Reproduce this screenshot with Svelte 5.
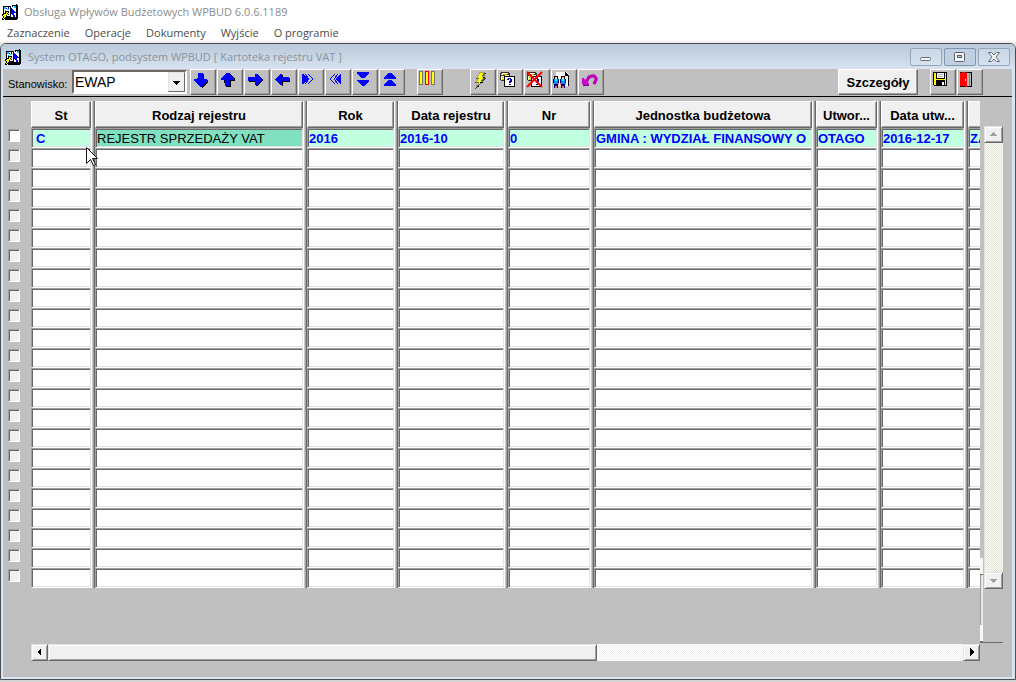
<script>
  const menu = ['Zaznaczenie', 'Operacje', 'Dokumenty', 'Wyjście', 'O programie'];

  const columns = [
    { title: 'St', width: 64, value: 'C' },
    { title: 'Rodzaj rejestru', width: 212, value: 'REJESTR SPRZEDAŻY VAT' },
    { title: 'Rok', width: 91, value: '2016' },
    { title: 'Data rejestru', width: 110, value: '2016-10' },
    { title: 'Nr', width: 86, value: '0' },
    { title: 'Jednostka budżetowa', width: 222, value: 'GMINA : WYDZIAŁ FINANSOWY O' },
    { title: 'Utwor...', width: 65, value: 'OTAGO' },
    { title: 'Data utw...', width: 87, value: '2016-12-17' },
    { title: '', width: 64, value: 'ZA' }
  ];

  const rows = Array.from({ length: 23 }, (_, i) => i);

  const navigation = [
    { name: 'Następny', icon: 'down' },
    { name: 'Poprzedni', icon: 'up' },
    { name: 'W prawo', icon: 'right' },
    { name: 'W lewo', icon: 'left' },
    { name: 'Ostatnia kolumna', icon: 'lastCol' },
    { name: 'Pierwsza kolumna', icon: 'firstCol' },
    { name: 'Ostatni', icon: 'last' },
    { name: 'Pierwszy', icon: 'first' }
  ];

  const actions = [
    { name: 'Wykonaj', icon: 'bolt' },
    { name: 'Zapytanie', icon: 'query' },
    { name: 'Anuluj zapytanie', icon: 'cancel' },
    { name: 'Użytkownicy', icon: 'people' },
    { name: 'Cofnij', icon: 'undo' }
  ];
</script>

{#snippet appIcon()}
  <svg class="app-icon" viewBox="0 0 16 16" shape-rendering="crispEdges" aria-hidden="true">
    <path d="M1 2h9V1h4V0h1v1h1v14h-1v1H3v-1H1z" fill="#000" />
    <path d="M2 3h6v9H2zM9 2h5v11H9z" fill="#fff" />
    <path d="M2 3h2v2H2zM5 5h2v1H5zM3 6h1v1H3zM12 2h2v2h-2z" fill="#0cf" />
    <path d="M9 4h1v1h1v1h1v1h1v1h1v1h-2v2h1v2h-2v-2h-1v-1H9z" fill="#00f" />
    <path d="M4 4h1v1H4zM6 3h1v2H6zM10 2h1v1h-1z" fill="#00c" />
    <path d="M3 7h4v2H6v1h1v1H5v2H4v2H2v1H0v-2h1v-2H0v-2h1V9h2z" fill="#000" />
    <path d="M4 8h2v1H5v1h1v1H4v2H3v1H2v1H1v-1h1v-2H1v-1h1v-1h2z" fill="#ff0" />
  </svg>
{/snippet}

{#snippet database()}
  <path d="M4 3h8v1h1v8H4v-1H3V4h1z" fill="#333" />
  <path d="M5 4h6v1H5zM4 5h2v1H4zM8 6h4v2H8zM4 7h3v4H4z" fill="#ffffb0" />
  <path d="M6 5h4v1H6zM5 8h2v1H5zM5 10h2v1H5z" fill="#c9b900" />
  <path d="M7 7h11v11H7z" fill="#000" />
  <path d="M8 8h9v9H8z" fill="#fff" />
  <path d="M11 9h3v1h1v3h-1v1h-2v-2h1v-2h-1v1h-2v-1h1zM12 15h2v1h-2z" fill="#009" />
{/snippet}

{#snippet person(x)}
  <g transform="translate({x} 0)">
    <path d="M2 7h4v3H2z" fill="#000" />
    <path d="M3 8h2v2H3z" fill="#fc9" />
    <path d="M1 10h6v6H6v3H4v-2v2H2v-3H1z" fill="#006" />
    <path d="M2 10h4v5H2z" fill="#08f" />
    <path d="M3 10h2v2H3z" fill="#0ff" />
    <path d="M1 14h1v2H1zM6 14h1v2H6zM3 17h2v2H3z" fill="#f66" />
  </g>
{/snippet}

{#snippet glyph(kind)}
  <svg class="glyph" viewBox="1 1 23 22" shape-rendering="crispEdges" aria-hidden="true">
    {#if kind === 'down'}
      <path d="M9 5h5v6h4v2l-6 6-6-6z" fill="#000" />
      <path d="M8 4h5v6h4v2l-6 6h-1l-6-6v-2h4z" fill="#00f" />
    {:else if kind === 'up'}
      <path d="M9 18h5v-6h4v-2l-6-6-6 6z" fill="#000" />
      <path d="M8 17h5v-6h4V9l-6-5h-1L4 9v2h4z" fill="#00f" />
    {:else if kind === 'right'}
      <path d="M5 9h7V6h2l5 5-5 6h-2v-4H5z" fill="#000" />
      <path d="M4 8h7V5h2l5 5v1l-5 5h-2v-4H4z" fill="#00f" />
    {:else if kind === 'left'}
      <path d="M19 9h-7V6h-1l-5 5 5 6h1v-4h7z" fill="#000" />
      <path d="M18 8h-7V5H9l-5 5v1l5 5h2v-4h7z" fill="#00f" />
    {:else if kind === 'lastCol'}
      <path d="M4 5h1l5 5-5 5H4z" fill="#00f" />
      <path d="M7 5l4 5-4 5M10 5l5 5-5 5" fill="none" stroke="#00f" />
    {:else if kind === 'firstCol'}
      <path d="M16 5h-1l-5 5 5 5h1z" fill="#00f" />
      <path d="M13 5l-4 5 4 5M10 5l-5 5 5 5" fill="none" stroke="#00f" />
    {:else if kind === 'last'}
      <path d="M5 3h12v2l-5 4h-2L5 5zM5 11h12v1l-5 5h-2l-5-5z" fill="#00f" />
    {:else if kind === 'first'}
      <path d="M10 4h2l5 4v2H5V8zM10 11h2l5 4v2H5v-2z" fill="#00f" />
    {:else if kind === 'columns'}
      <path d="M2.5 2.5h3v13h-3zM14.5 2.5h3v13h-3z" fill="#ff0" stroke="#777" />
      <path d="M8.500 2.500h3v13h-3z" fill="#ff0" stroke="#f00" />
    {:else if kind === 'bolt'}
      <path d="M10 4h6l-3 5h3l-4 4h1L5 20l3-6H5l3-4H6z" fill="#444" />
      <path d="M10 3h5l-3 4h3l-4 5h2l-7 6 3-5H6l3-4H7z" fill="#ff0" stroke="#777" stroke-width=".6" />
      <path d="M13 8h2M10 13h3M7 17h2" stroke="#000" />
    {:else if kind === 'query'}
      {@render database()}
    {:else if kind === 'cancel'}
      {@render database()}
      <path d="M3 3l15 15M18 3L3 18" stroke="#f00" stroke-width="2" shape-rendering="auto" />
    {:else if kind === 'people'}
      <path d="M5 3h10l3 3v11H5z" fill="#fff" />
      <path d="M14 3h1v1h1v1h1v1h1v11h-1V7h-3z" fill="#000" />
      {@render person(1)}
      {@render person(8)}
    {:else if kind === 'undo'}
      <path d="M8 13l3-5 3-1h2l2 2v2l-2 4" fill="none" stroke="#808" stroke-width="3" shape-rendering="auto" />
      <path d="M8 13l3-5 3-1h2l2 2v2l-2 4" fill="none" stroke="#c0c" stroke-width="2" shape-rendering="auto" />
      <path d="M4 9h1l6 6v1H5l-1-1z" fill="#c0c" />
      <path d="M5 16h6v1H5z" fill="#808" />
    {:else if kind === 'save'}
      <path d="M3 3h14v14H4l-1-1z" fill="#000" />
      <path d="M4 4h2v6h9V4h1v12h-1v-5H6v5H4z" fill="#ff0" />
      <path d="M4 10h12v1H4z" fill="#ff0" />
      <path d="M7 4h7v5H7z" fill="#fff" />
      <path d="M8 5h5v1H8zM8 7h5v1H8z" fill="#aaa" />
      <path d="M12 13h2v3h-2z" fill="#fff" />
    {:else if kind === 'door'}
      <path d="M3 3h12v15H3z" fill="#000" />
      <path d="M9 4h5v13H9z" fill="#bbb" />
      <path d="M12 4h1v13h-1z" fill="#777" />
      <path d="M3 4h2V3h3v1h2v14H8v-1H3z" fill="#f00" />
      <path d="M8 10h1v2H8z" fill="#ff0" />
    {/if}
  </svg>
{/snippet}

{#snippet triangle(points, color)}
  <svg class="triangle" viewBox="0 0 9 9" aria-hidden="true"><polygon {points} fill={color} /></svg>
{/snippet}

<div class="app">
  <header class="app-title">
    {@render appIcon()}
    <span>Obsługa Wpływów Budżetowych WPBUD 6.0.6.1189</span>
  </header>
  <nav class="menu">
    {#each menu as item}<button>{item}</button>{/each}
  </nav>

  <section class="window">
    <header class="window-title">
      {@render appIcon()}
      <span class="caption">System OTAGO, podsystem WPBUD [ Kartoteka rejestru VAT ]</span>
      <div class="controls">
        <button aria-label="Minimalizuj">
          <svg viewBox="0 0 14 12"><rect x="1.500" y="6.500" width="10" height="3" rx="1" fill="#f5f5f5" stroke="#666d77" /></svg>
        </button>
        <button class="restore" aria-label="Przywróć">
          <svg viewBox="0 0 14 12"><rect x="1.500" y="1.500" width="10" height="9" rx="1" fill="#f5f5f5" stroke="#59616d" /><rect x="4.500" y="4.500" width="4" height="2" fill="#b8cbe0" stroke="#59616d" /></svg>
        </button>
        <button aria-label="Zamknij">
          <svg viewBox="0 0 14 12"><path d="M1.500 1.500h3L7 4l2.500-2.500h3L9 6l3.500 4.500h-3L7 8l-2.500 2.500h-3L5 6z" fill="#f5f5f5" stroke="#666d77" /></svg>
        </button>
      </div>
    </header>

    <div class="toolbar">
      <label for="station">Stanowisko:</label>
      <div class="combo">
        <select id="station"><option>EWAP</option></select>
        <span class="drop">{@render triangle('1,3 8,3 4.5,7', '#000')}</span>
      </div>
      <div class="group">
        {#each navigation as tool}
          <button class="tool" aria-label={tool.name}>{@render glyph(tool.icon)}</button>
        {/each}
      </div>
      <div class="group view">
        <button class="tool" aria-label="Kolumny">{@render glyph('columns')}</button>
      </div>
      <div class="group">
        {#each actions as tool}
          <button class="tool" aria-label={tool.name}>{@render glyph(tool.icon)}</button>
        {/each}
      </div>
      <button class="details">Szczegóły</button>
      <div class="group">
        <button class="tool" aria-label="Zapisz">{@render glyph('save')}</button>
        <button class="tool" aria-label="Wyjście">{@render glyph('door')}</button>
      </div>
    </div>

    <main class="content">
      <div class="area">
        <div class="viewport">
          <table>
            <colgroup>
              <col class="mark-col" />
              {#each columns as column}<col style="width: {column.width}px" />{/each}
            </colgroup>
            <thead>
              <tr>
                <td></td>
                {#each columns as column}<th scope="col"><div>{column.title}</div></th>{/each}
              </tr>
            </thead>
            <tbody>
              {#each rows as row}
                <tr class:filled={row === 0}>
                  <td class="mark"><input type="checkbox" aria-label="Zaznacz wiersz {row + 1}" /></td>
                  {#each columns as column, c}
                    <td class="cell">
                      <input
                        type="text"
                        readonly
                        class:current={row === 0 && c === 1}
                        class:indented={c === 0}
                        aria-label="{column.title} {row + 1}"
                        value={row === 0 ? column.value : ''}
                      />
                    </td>
                  {/each}
                </tr>
              {/each}
            </tbody>
          </table>
        </div>
        <div class="sliver"><i></i><i></i></div>
        <div class="vscroll">
          <button aria-label="W górę">{@render triangle('0,6 8,6 4,2', '#a0a0a0')}</button>
          <div class="track"></div>
          <button aria-label="W dół">{@render triangle('0,3 8,3 4,7', '#a0a0a0')}</button>
        </div>
      </div>
      <div class="hscroll">
        <button aria-label="Przewiń w lewo">{@render triangle('6,0 6,8 2,4', '#000')}</button>
        <div class="htrack"><div class="thumb"></div></div>
        <button aria-label="Przewiń w prawo">{@render triangle('3,0 3,8 7,4', '#000')}</button>
      </div>
    </main>
  </section>

  <svg class="pointer" viewBox="0 0 12 20" aria-hidden="true">
    <path d="M.5.5v16l4-4 3 6 2-1-3-6h5z" fill="#fff" stroke="#111" />
  </svg>
</div>

<style>
  :global(body) {
    margin: 0;
    background: #fff;
  }

  .app {
    position: relative;
    display: flex;
    flex-direction: column;
    box-sizing: border-box;
    min-height: 100vh;
    padding-bottom: 2px;
    overflow: hidden;
    background: linear-gradient(#fff 40px, #e8e8e8 43px, #d4d4d4 60px);
    font-family: "Liberation Sans", Arial, sans-serif;
    color: #000;
  }

  button {
    box-sizing: border-box;
    margin: 0;
    padding: 0;
    font: inherit;
    color: inherit;
  }

  svg {
    display: block;
    flex: none;
  }

  .app-title {
    display: flex;
    align-items: center;
    gap: 6px;
    height: 23px;
    padding-left: 2px;
    font: 11px/16px "Open Sans", sans-serif;
    color: #8c8c8c;
  }

  .app-icon {
    width: 16px;
    height: 16px;
  }

  .menu {
    display: flex;
    gap: 15px;
    height: 20px;
    padding-left: 7px;
    font: 11px/20px "Open Sans", sans-serif;
    color: #4c4c4c;
  }

  .menu button {
    border: 0;
    background: none;
  }

  .window {
    display: flex;
    flex: 1;
    flex-direction: column;
    border: 1px solid #4b4f54;
    border-radius: 6px 6px 0 0;
    padding: 0 3px 2px 2px;
    background: #d7e4f2;
    overflow: hidden;
  }

  .window-title {
    display: flex;
    align-items: center;
    gap: 7px;
    height: 25px;
    margin: 0 -3px 0 -2px;
    padding: 0 5px 0 4px;
    background: linear-gradient(#b9c9d9, #d7e3f0);
    font: 11px/16px "Open Sans", sans-serif;
    color: #8a929c;
  }

  .caption {
    flex: 1;
    white-space: nowrap;
  }

  .controls {
    display: flex;
    gap: 2px;
  }

  .controls button {
    display: grid;
    place-items: center;
    width: 32px;
    height: 18px;
    border: 1px solid #96a5b7;
    border-radius: 2px;
    background: linear-gradient(#c8d6e5, #d6e2ef);
  }

  .controls .restore {
    border-color: #8595aa;
    background: #bfd0e4;
  }

  .controls svg {
    width: 14px;
    height: 12px;
  }

  .toolbar {
    display: flex;
    align-items: flex-start;
    height: 27px;
    padding: 0 29px 0 5px;
    border-bottom: 1px solid #000;
    background: #c0c0c0;
  }

  .toolbar label {
    width: 64px;
    font-size: 11px;
    line-height: 30px;
  }

  .combo {
    position: relative;
    width: 115px;
    margin: 1px 3px 0 0;
  }

  .combo select {
    display: block;
    width: 100%;
    height: 24px;
    padding: 0 1px;
    border: 2px solid;
    border-color: #696969 #fff #fff #696969;
    border-radius: 0;
    appearance: none;
    background: #fff;
    color: #000;
    font: 14px/20px "Liberation Sans", Arial, sans-serif;
    outline: 0;
  }

  .drop {
    position: absolute;
    top: 2px;
    right: 2px;
    display: grid;
    place-items: center;
    box-sizing: border-box;
    width: 17px;
    height: 20px;
    border: 1px solid;
    border-color: #e3e3e3 #696969 #696969 #e3e3e3;
    background: #f0f0f0;
    pointer-events: none;
  }

  .triangle {
    width: 9px;
    height: 9px;
    shape-rendering: crispEdges;
  }

  .group {
    display: flex;
    gap: 1px;
  }

  .tool {
    width: 26px;
    height: 26px;
    border: 1px solid;
    border-color: #fff #696969 #696969 #fff;
    background: #c0c0c0;
    box-shadow: inset -1px -1px #a0a0a0;
  }

  .glyph {
    width: 23px;
    height: 22px;
    margin-bottom: 2px;
  }

  .view {
    margin: 0 27px 0 12px;
  }

  .details {
    width: 80px;
    height: 26px;
    margin: 0 12px 0 auto;
    border: 1px solid;
    border-color: #fff #696969 #696969 #fff;
    background: #f0f0f0;
    box-shadow: inset -1px -1px #a0a0a0;
    font-size: 13px;
    font-weight: bold;
  }

  .content {
    display: flex;
    flex: 1;
    flex-direction: column;
    padding: 4px 9px 16px 0;
    background: #c0c0c0;
  }

  .area {
    display: flex;
    flex: 1;
    min-width: 0;
  }

  .viewport {
    flex: 1;
    min-width: 0;
    overflow: hidden;
  }

  table {
    width: 1029px;
    table-layout: fixed;
    border-collapse: collapse;
  }

  .mark-col {
    width: 28px;
  }

  th,
  td {
    padding: 0;
  }

  th,
  .cell {
    padding-right: 4px;
    background: linear-gradient(90deg, #fff 1px, #c8c8c8 1px 2px, #a0a0a0 2px 3px, #696969 3px) right / 4px 100% no-repeat;
  }

  th div {
    box-sizing: border-box;
    height: 27px;
    border: 1px solid;
    border-color: #fff #696969 #696969 #fff;
    background: #f0f0f0;
    box-shadow: inset -1px -1px #a0a0a0;
    font-size: 13px;
    font-weight: bold;
    line-height: 27px;
    text-align: center;
  }

  .cell input {
    display: block;
    box-sizing: border-box;
    width: 100%;
    height: 20px;
    margin: 0;
    padding: 0;
    border: 1px solid;
    border-color: #a0a0a0 #e3e3e3 #fff #a0a0a0;
    border-radius: 0;
    background: #fff;
    box-shadow: inset 1px 1px #696969, inset 0 -1px #e3e3e3;
    color: #00f;
    font: bold 13px/18px "Liberation Sans", Arial, sans-serif;
    text-indent: 1px;
    outline: 0;
  }

  .filled .cell input {
    background: #c0ffe0;
  }

  .filled .cell .current {
    background: #80e0c0;
    color: #000;
    font-weight: normal;
  }

  .cell .indented {
    text-indent: 4px;
  }

  .mark {
    vertical-align: top;
  }

  .mark input {
    display: block;
    box-sizing: border-box;
    width: 12px;
    height: 13px;
    margin: 1px 0 0 5px;
    border: 1px solid;
    border-color: #a0a0a0 #fff #fff #a0a0a0;
    appearance: none;
    background: #f0f0f0;
    box-shadow: inset 1px 1px #696969;
  }

  .filled .mark input {
    background: #fff;
  }

  .sliver {
    display: flex;
    flex-direction: column;
    justify-content: space-between;
    align-self: flex-end;
    width: 3px;
    height: 84px;
    border-bottom: 1px solid #696969;
    background: #e8e8e0;
    box-shadow: inset 1px 0 #a0a0a0;
  }

  .sliver i {
    height: 16px;
    background: #f8f8f8;
    border-bottom: 1px solid #696969;
  }

  .vscroll {
    display: flex;
    flex-direction: column;
    width: 20px;
    padding: 25px 0 53px 1px;
    border-bottom: 1px solid #696969;
    box-sizing: border-box;
  }

  .vscroll button,
  .hscroll button,
  .thumb {
    display: grid;
    place-items: center;
    border: 1px solid;
    border-color: #e3e3e3 #696969 #696969 #e3e3e3;
    background: #f0f0f0;
    box-shadow: inset 1px 1px #fff, inset -1px -1px #a0a0a0;
  }

  .vscroll button {
    height: 17px;
  }

  .track {
    flex: 1;
    border-left: 1px solid #e3e3e3;
    background: repeating-conic-gradient(#fffff0 0 25%, #e0e0dc 0 50%) 0 0 / 2px 2px;
  }

  .hscroll {
    display: flex;
    height: 17px;
    margin: 1px 23px 0 28px;
  }

  .hscroll button {
    width: 17px;
  }

  .htrack {
    flex: 1;
    background: repeating-conic-gradient(#fff 0 25%, #f0f0f0 0 50%) 0 0 / 2px 2px;
  }

  .thumb {
    box-sizing: border-box;
    width: 60%;
    height: 17px;
  }

  .pointer {
    position: absolute;
    top: 147px;
    left: 86px;
    width: 12px;
    height: 20px;
  }
</style>
